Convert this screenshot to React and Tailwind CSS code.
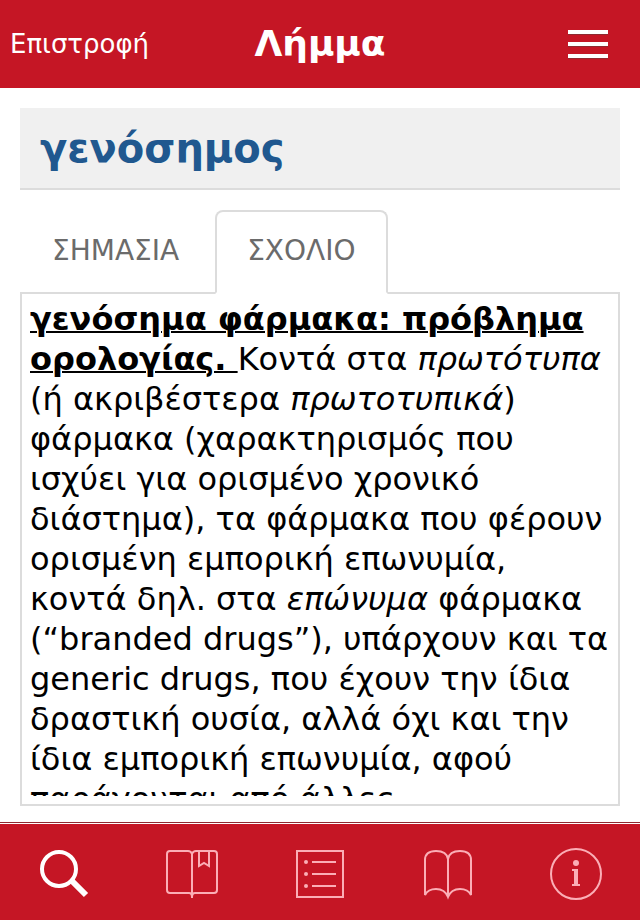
import { useState } from "react";

const tabs = [
    { id: "meaning", label: "ΣΗΜΑΣΙΑ" },
    { id: "comment", label: "ΣΧΟΛΙΟ" },
];

const SearchIcon = () => (
    <svg viewBox="0 0 56 56" className="w-14 h-14" fill="none" stroke="currentColor" aria-hidden="true">
        <circle cx="23" cy="23" r="17" strokeWidth="4" />
        <path d="M35 34 50 49" strokeWidth="6" />
    </svg>
);

const BookmarkIcon = () => (
    <svg viewBox="0 0 56 56" className="w-14 h-14" fill="none" stroke="currentColor" strokeWidth="2" aria-hidden="true">
        <path d="M28 8Q27 5 24 5H6Q3 5 3 8V44Q3 47 6 47H25Q28 47 28 51Q28 47 31 47H50Q53 47 53 44V8Q53 5 50 5H32Q29 5 28 8V52" />
        <path d="M35 5V20L40 17L45 20V5" />
    </svg>
);

const ListIcon = () => (
    <svg viewBox="0 0 56 56" className="w-14 h-14" fill="none" stroke="currentColor" strokeWidth="2" aria-hidden="true">
        <rect x="5" y="5" width="46" height="46" />
        <path d="M20 16H44M20 28H44M20 40H44" />
        <g fill="currentColor" stroke="none">
            <circle cx="14" cy="16" r="2" />
            <circle cx="14" cy="28" r="2" />
            <circle cx="14" cy="40" r="2" />
        </g>
    </svg>
);

const OpenBookIcon = () => (
    <svg viewBox="0 0 56 56" className="w-14 h-14" fill="none" stroke="currentColor" strokeWidth="2" aria-hidden="true">
        <path d="M5 49V14C5 8 9 5 16 5C22 5 27 7 28 13C29 7 34 5 40 5C47 5 51 8 51 14V49C49 45 45 43 40 43C34 43 30 46 28 51C26 46 22 43 16 43C11 43 7 45 5 49Z" />
        <path d="M28 11V51" />
    </svg>
);

const InfoIcon = () => (
    <svg viewBox="0 0 56 56" className="w-14 h-14" fill="none" stroke="currentColor" aria-hidden="true">
        <circle cx="28" cy="28" r="25" strokeWidth="2" />
        <circle cx="28" cy="17" r="3" fill="currentColor" stroke="none" />
        <path d="M28 23V40" strokeWidth="4" />
        <path d="M24 24H28M24 39H32" strokeWidth="2" />
    </svg>
);

const navItems = [
    { label: "Αναζήτηση", Icon: SearchIcon, active: true },
    { label: "Σελιδοδείκτες", Icon: BookmarkIcon },
    { label: "Λίστα", Icon: ListIcon },
    { label: "Λεξικό", Icon: OpenBookIcon },
    { label: "Πληροφορίες", Icon: InfoIcon },
];

const App = () => {
    const [tab, setTab] = useState("comment");

    return (
        <div className="h-screen flex flex-col bg-white text-black font-['DejaVu_Sans',sans-serif]">
            <header className="grid grid-cols-[1fr_auto_1fr] items-center h-22 shrink-0 bg-[#c51625] text-white">
                <a href="#back" className="justify-self-start pl-[10px] text-[26px] leading-10">
                    Επιστροφή
                </a>
                <h1 className="text-4xl font-bold">Λήμμα</h1>
                <button type="button" aria-label="Μενού" className="justify-self-end flex flex-col gap-2 mr-8">
                    <span className="w-10 h-1 bg-white shadow-[0_1px_0_#8f2a31]" />
                    <span className="w-10 h-1 bg-white shadow-[0_1px_0_#8f2a31]" />
                    <span className="w-10 h-1 bg-white shadow-[0_1px_0_#8f2a31]" />
                </button>
            </header>

            <main className="flex-1 min-h-0 flex flex-col px-5 pt-5 pb-4">
                <h2 className="flex items-center h-[82px] shrink-0 px-5 bg-[#f0f0f0] border-b-2 border-[#dcdcdc] text-[40px] font-bold text-[#20588f]">
                    γενόσημος
                </h2>

                <div role="tablist" className="relative z-10 flex gap-1 shrink-0 mt-5">
                    {tabs.map((t) => (
                        <button
                            key={t.id}
                            id={`tab-${t.id}`}
                            type="button"
                            role="tab"
                            aria-selected={tab === t.id}
                            aria-controls="entry-panel"
                            onClick={() => setTab(t.id)}
                            className={`h-[84px] px-[30px] pb-[2px] rounded-t-lg border-2 text-[28px] text-[#6b6b6b] ${
                                tab === t.id ? "bg-white border-[#dcdcdc] border-b-white" : "border-transparent"
                            }`}
                        >
                            {t.label}
                        </button>
                    ))}
                </div>

                <section
                    id="entry-panel"
                    role="tabpanel"
                    aria-labelledby={`tab-${tab}`}
                    className="flex-1 min-h-0 flex -mt-[2px] px-2 pt-[5px] pb-2 border-2 border-[#dcdcdc]"
                >
                    <p className="overflow-hidden text-[32px] leading-10">
                        <b className="underline decoration-2">γενόσημα φάρμακα: πρόβλημα ορολογίας. </b>
                        Κοντά στα <i>πρωτότυπα</i> (ή ακριβέστερα <i>πρωτοτυπικά</i>) φάρμακα (χαρακτηρισμός που
                        ισχύει για ορισμένο χρονικό διάστημα), τα φάρμακα που φέρουν ορισμένη εμπορική επωνυμία,
                        κοντά δηλ. στα <i>επώνυμα</i> φάρμακα (“branded drugs”), υπάρχουν και τα generic drugs, που
                        έχουν την ίδια δραστική ουσία, αλλά όχι και την ίδια εμπορική επωνυμία, αφού παράγονται από
                        άλλες
                    </p>
                </section>
            </main>

            <nav className="shrink-0 border-t border-[#8f2a31] pt-px">
                <ul className="grid grid-cols-5 h-24 bg-[#c51625]">
                    {navItems.map(({ label, Icon, active }) => (
                        <li key={label} className="flex justify-center pt-[22px]">
                            <a href="#nav" aria-label={label} className={active ? "text-white" : "text-[#fbaeb6]"}>
                                <Icon />
                            </a>
                        </li>
                    ))}
                </ul>
            </nav>
        </div>
    );
};

export default App;
